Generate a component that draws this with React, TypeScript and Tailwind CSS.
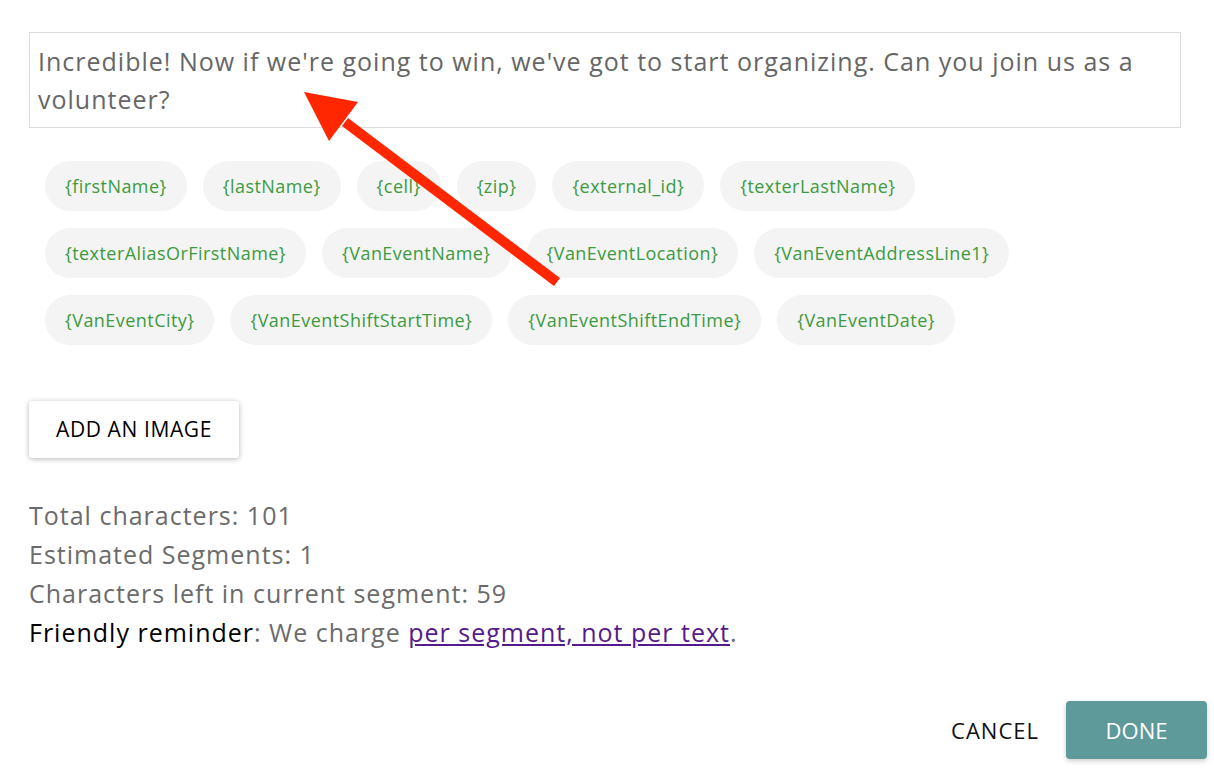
import React from "react";

const chipsRows: string[][] = [
  ["{firstName}", "{lastName}", "{cell}", "{zip}", "{external_id}", "{texterLastName}"],
  ["{texterAliasOrFirstName}", "{VanEventName}", "{VanEventLocation}", "{VanEventAddressLine1}"],
  ["{VanEventCity}", "{VanEventShiftStartTime}", "{VanEventShiftEndTime}", "{VanEventDate}"],
];

export default function App() {
  const font = { fontFamily: '"Open Sans", "Noto Sans", sans-serif' };
  return (
    <div className="relative w-[1214px] h-[772px] bg-white overflow-hidden" style={font}>
      <div className="pl-[29px] pr-[33px] pt-[32px]">
        <div className="border border-[#dcdcdc] px-[8px] py-[9px] text-[25px] tracking-[1px] leading-[38px] text-[#666666]">
          Incredible! Now if we're going to win, we've got to start organizing. Can you join us as a volunteer?
        </div>
        <div className="mt-[33px] pl-[16px] flex flex-col gap-[17px]">
          {chipsRows.map((row, i) => (
            <div key={i} className="flex gap-[16px]">
              {row.map((c) => (
                <span
                  key={c}
                  className="h-[50px] px-[20px] rounded-full bg-[#f4f4f4] text-[#3c9b40] text-[18px] tracking-[0.45px] flex items-center"
                >
                  {c}
                </span>
              ))}
            </div>
          ))}
        </div>
        <div className="mt-[56px]">
          <button className="h-[57px] px-[27px] bg-white rounded-[3px] text-[21px] tracking-[0.6px] text-black shadow-[0_1px_6px_rgba(0,0,0,0.18),0_1px_4px_rgba(0,0,0,0.12)]">
            ADD AN IMAGE
          </button>
        </div>
        <div className="mt-[38px] text-[25px] tracking-[1px] leading-[39px] text-[#6b6b6b]">
          <div>Total characters: 101</div>
          <div>Estimated Segments: 1</div>
          <div>Characters left in current segment: 59</div>
          <div>
            <span className="text-black">Friendly reminder</span>: We charge{" "}
            <a className="text-[#551a8b] underline" href="#">
              per segment, not per text
            </a>
            .
          </div>
        </div>
      </div>
      <div className="flex justify-end items-center pr-[7px] mt-[49px] gap-[27px]">
        <button className="text-[22px] tracking-[1px] text-[#111111]">CANCEL</button>
        <button className="h-[58px] w-[141px] rounded-[4px] bg-[#5f9a9b] text-white text-[22px] shadow-[0_2px_5px_rgba(0,0,0,0.2)]">
          DONE
        </button>
      </div>
      <svg className="absolute left-0 top-0 pointer-events-none" width="1214" height="772">
        <line x1="557" y1="282" x2="345" y2="122" stroke="#ff2600" strokeWidth="10" />
        <polygon points="304,92 358,102 329,141" fill="#ff2600" />
      </svg>
    </div>
  );
}
